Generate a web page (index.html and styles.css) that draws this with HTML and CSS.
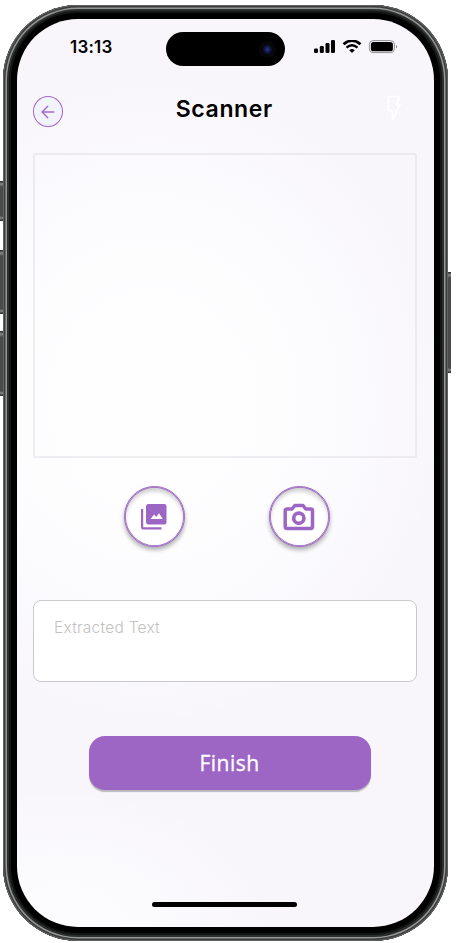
FILE: index.html
```html
<!DOCTYPE html>
<html lang="en">
<head>
<meta charset="utf-8">
<title>Scanner</title>
<link rel="stylesheet" href="styles.css">
</head>
<body>
<div class="phone">
  <span class="key key-action"></span>
  <span class="key key-up"></span>
  <span class="key key-down"></span>
  <span class="key key-power"></span>
  <main class="screen">
    <div class="status">
      <span class="time">13:13</span>
      <span class="island"><i class="lens"></i></span>
      <svg class="indicators" width="84" height="14" viewBox="0 0 84 14">
        <rect x="0" y="8.5" width="4" height="4.5" rx="1.2"/>
        <rect x="5.8" y="6" width="4" height="7" rx="1.2"/>
        <rect x="11.5" y="3" width="4" height="10" rx="1.2"/>
        <rect x="17" y="0" width="4" height="13" rx="1.2"/>
        <path d="M29.5 4.3Q38 -3 46.500 4.300" fill="none" stroke="#000" stroke-width="2.700"/>
        <path d="M32.500 7.600Q38 3 43.500 7.600" fill="none" stroke="#000" stroke-width="2.500"/>
        <path d="M35.200 10.200Q38 7.800 40.800 10.200L38 13z"/>
        <rect x="55.400" y=".6" width="25" height="12" rx="3.700" fill="none" stroke="#929095"/>
        <rect x="56.900" y="2" width="22" height="9.300" rx="2.600"/>
        <path d="M82 4.800q2.200 1.800 0 3.800z" fill="#888"/>
      </svg>
    </div>
    <header class="header">
      <button class="back" aria-label="Back">
        <svg width="14" height="14" viewBox="0 0 14 14"><path d="M12.800 7H1.300M6.800 1.200L1 7L6.800 12.800"/></svg>
      </button>
      <h1>Scanner</h1>
      <svg class="flash" width="15" height="28" viewBox="0 0 15 28"><path d="M1.500 1.500H12.500L9.500 9.500H13L5.500 25V15.500H1.500Z"/></svg>
    </header>
    <section class="viewfinder"></section>
    <div class="sources">
      <button class="round" aria-label="Gallery">
        <svg width="26" height="26" viewBox="0 0 26 26"><path fill-rule="evenodd" d="M7.500 0h15.500a2.500 2.500 0 0 1 2.500 2.500v15.500a2.500 2.500 0 0 1-2.500 2.500H7.500a2.500 2.500 0 0 1-2.500-2.500V2.500A2.500 2.500 0 0 1 7.500 0ZM9.500 15H21.800L18 9.300 15.200 12.900 13.200 10.500ZM0 5h2.200v18.200H20.500V25.500H2Q0 25.500 0 23.300Z"/></svg>
      </button>
      <button class="round" aria-label="Camera">
        <svg width="32" height="28" viewBox="0 0 32 28"><g fill="none" stroke="#9d66c4" stroke-linejoin="round"><path stroke-width="3.500" d="M4.200 6H9L11.800 2.500H20L22.800 6H27.800Q29.500 6 29.500 7.800V23.500Q29.500 25.500 27.800 25.500H4Q2.200 25.500 2.200 23.500V7.800Q2.200 6 4.200 6Z"/><circle cx="15.800" cy="15.200" r="5.100" stroke-width="3.700"/></g></svg>
      </button>
    </div>
    <div class="extracted">Extracted Text</div>
    <button class="finish">Finish</button>
    <span class="home"></span>
  </main>
</div>
</body>
</html>
```
FILE: styles.css
```css
* { box-sizing: border-box; }
body {
  margin: 0;
  height: 943px;
  padding: 5px 0 0 3px;
  background: #fff;
  overflow: hidden;
  font-family: Inter, "Liberation Sans", sans-serif;
}
button { padding: 0; font: inherit; }
.phone {
  position: relative;
  width: 445px;
  height: 936px;
  padding: 14px;
  padding-right: 14.500px;
  padding-left: 13.500px;
  border-radius: 75px;
  background: #000;
  box-shadow: inset 0 0 0 1px #606160, inset 0 0 0 2.500px #3c3d3d, inset 0 0 0 4px #969797, inset 0 0 0 6px #2c2d2d, inset 0 0 0 8px #141515;
}
.screen {
  height: 908px;
  padding: 9px 16.500px 0;
  display: flex;
  flex-direction: column;
  border-radius: 61px;
  background:
    radial-gradient(ellipse 300px 330px at 32% 42%, #fefeff 0, rgba(254, 254, 255, .85) 45%, rgba(254, 254, 255, 0) 100%),
    radial-gradient(ellipse 220px 140px at 10% 100%, #fdfdfe 0, rgba(253, 253, 254, 0) 100%),
    #f8f6fb;
}
.key {
  position: absolute;
  width: 3px;
  background: linear-gradient(#222, #888 3px, #484b49 6px, #484b49 calc(100% - 5px), #888 calc(100% - 3px), #222);
}
.key-action { left: -3px; top: 176px; height: 40px; }
.key-up { left: -3px; top: 245px; height: 64px; }
.key-down { left: -3px; top: 326px; height: 65px; }
.key-power { right: -3px; top: 267px; height: 101px; }
.status {
  display: flex;
  height: 43px;
  padding-left: 37px;
  align-items: flex-start;
}
.time {
  width: 96px;
  margin-top: 9px;
  font-size: 17px;
  line-height: 20px;
  font-weight: 600;
  letter-spacing: .2px;
}
.island {
  display: flex;
  width: 119px;
  height: 34px;
  margin-top: 4px;
  padding-right: 13px;
  border-radius: 17px;
  background: #000;
  align-items: center;
  justify-content: flex-end;
}
.lens {
  width: 9px;
  height: 9px;
  border-radius: 50%;
  background: radial-gradient(circle, #2a3a90 0, #141950 2.500px, #080a20 5px);
  box-shadow: 0 0 0 4px #07070b;
}
.indicators { margin: 12px 0 0 29px; }
.header {
  display: flex;
  height: 81px;
  padding-top: 25px;
  align-items: flex-start;
}
.back {
  display: flex;
  width: 30px;
  height: 31px;
  margin-left: -.500px;
  align-items: center;
  justify-content: center;
  border: 1px solid #a765cf;
  border-radius: 50%;
  background: #f1f4fb;
}
.back path { fill: none; stroke: #a765cf; stroke-width: 1.300; stroke-linecap: round; stroke-linejoin: round; }
h1 {
  flex: 1;
  margin: -1px 0 0;
  padding-right: 1px;
  text-align: center;
  font-size: 23px;
  line-height: 28px;
  font-weight: 600;
  letter-spacing: .6px;
}
.flash { margin: -1px 15px 0 0; fill: none; stroke: #fff; stroke-width: 1.600; }
.viewfinder {
  height: 305px;
  margin-top: 1px;
  border: 2px solid rgba(225, 224, 229, .55);
  border-radius: 2px;
}
.sources {
  display: flex;
  gap: 84px;
  margin: 28px 0 0 90.800px;
}
.round {
  display: flex;
  width: 61px;
  height: 61px;
  align-items: center;
  justify-content: center;
  border: 1px solid #9d66c4;
  border-radius: 50%;
  background: #fff;
  box-shadow: inset 0 0 0 .800px #9d66c4, 0 3px 4px rgba(0, 0, 0, .3), inset 0 4px 4px rgba(0, 0, 0, .2);
}
.round svg { fill: #9d66c4; }
.extracted {
  height: 82px;
  margin-top: 53px;
  padding: 14px 20px;
  border: 1px solid #cbc9d0;
  border-radius: 8px;
  background: #fff;
  color: #c2c2c2;
  font-size: 15.500px;
  line-height: 25px;
  font-weight: 300;
  letter-spacing: .24px;
}
.finish {
  width: 282px;
  height: 54px;
  margin: 54px 0 0 55.500px;
  border: 0;
  border-radius: 16px;
  background: #9d66c4;
  box-shadow: 0 2px 1px rgba(0, 0, 0, .25);
  color: #fff;
  font-family: "Open Sans", "Noto Sans", sans-serif;
  font-size: 21px;
  font-weight: 500;
  letter-spacing: .5px;
  -webkit-text-stroke: .3px #fff;
}
.home {
  width: 145px;
  height: 5px;
  margin: 112px 0 0 119px;
  border-radius: 3px;
  background: #000;
}
```
